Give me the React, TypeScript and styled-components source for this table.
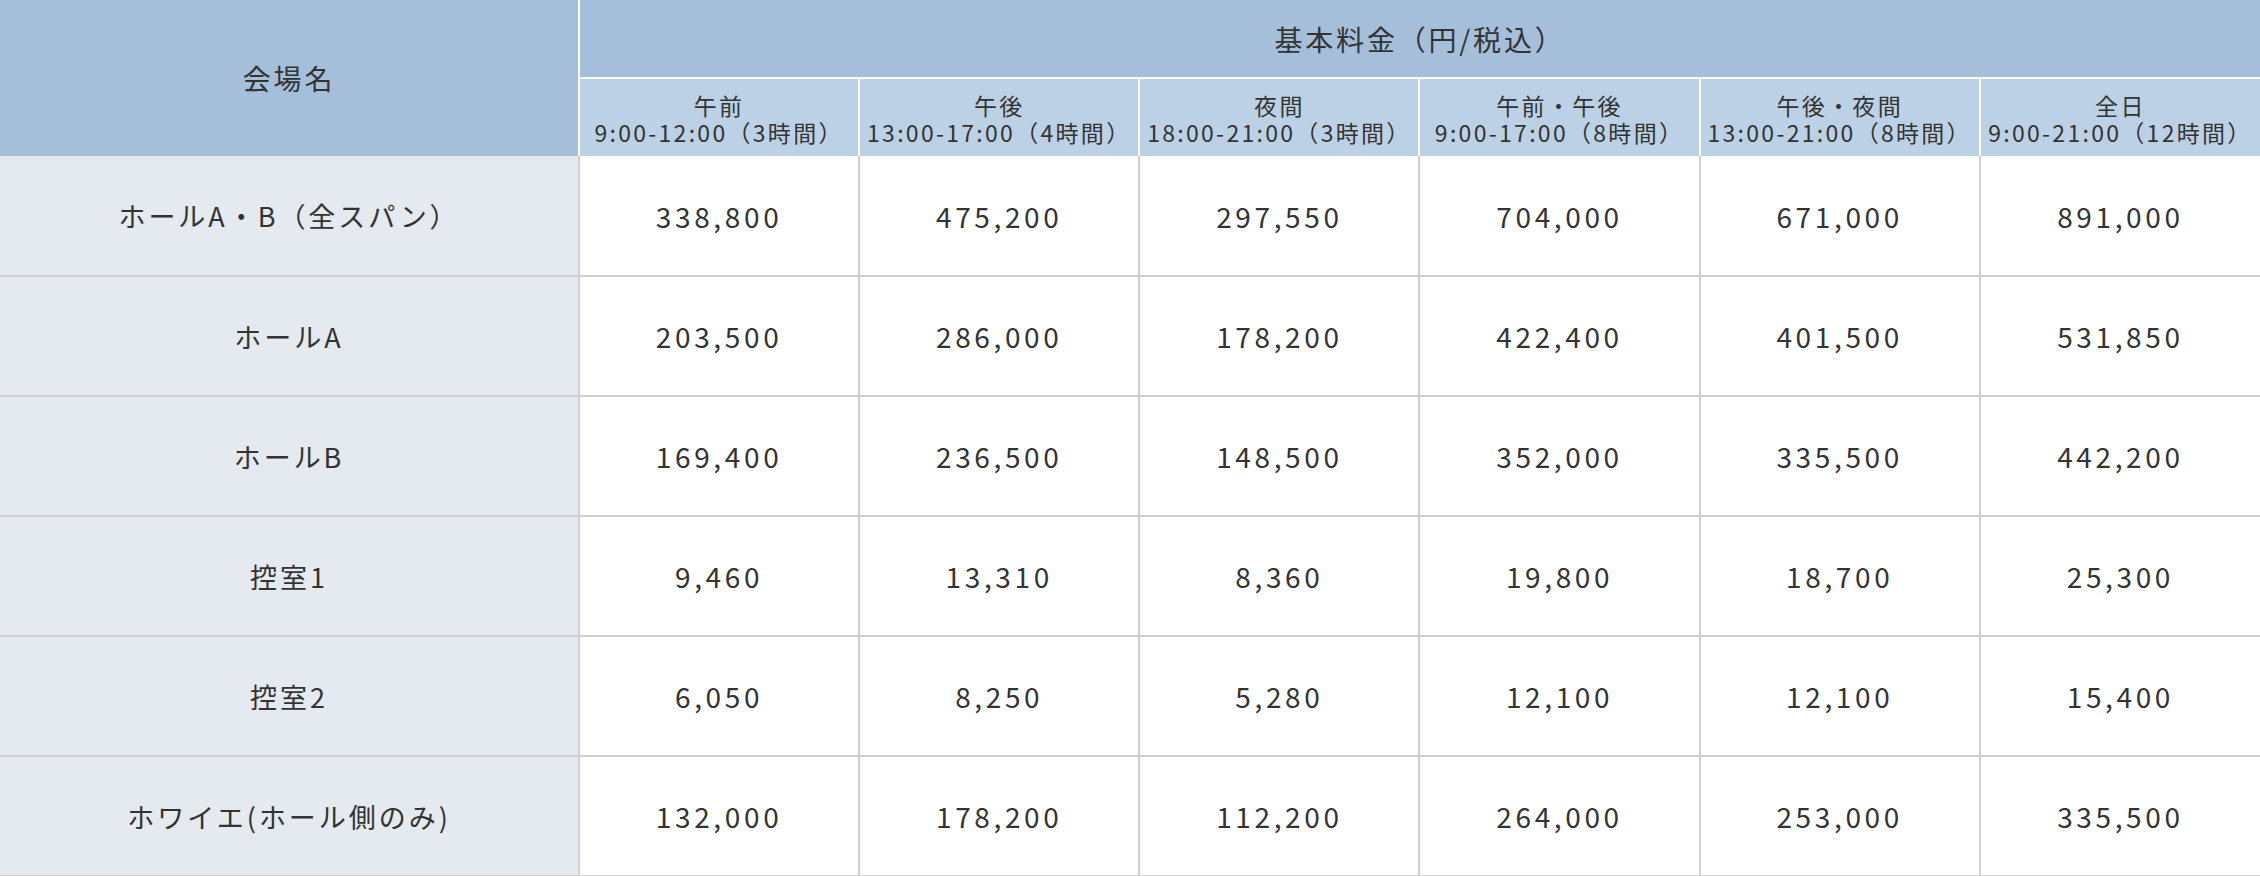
import React from "react";
import styled, { createGlobalStyle } from "styled-components";

const GlobalStyle = createGlobalStyle`
  html, body {
    margin: 0;
    padding: 0;
    background: #ffffff;
  }
  body {
    font-family: "Noto Sans CJK JP", "Noto Sans", sans-serif;
    color: #333333;
  }
`;

interface PriceRow {
  name: string;
  prices: string[];
}

const slots = [
  { label: "午前", time: "9:00-12:00（3時間）" },
  { label: "午後", time: "13:00-17:00（4時間）" },
  { label: "夜間", time: "18:00-21:00（3時間）" },
  { label: "午前・午後", time: "9:00-17:00（8時間）" },
  { label: "午後・夜間", time: "13:00-21:00（8時間）" },
  { label: "全日", time: "9:00-21:00（12時間）" },
];

const rows: PriceRow[] = [
  { name: "ホールA・B（全スパン）", prices: ["338,800", "475,200", "297,550", "704,000", "671,000", "891,000"] },
  { name: "ホールA", prices: ["203,500", "286,000", "178,200", "422,400", "401,500", "531,850"] },
  { name: "ホールB", prices: ["169,400", "236,500", "148,500", "352,000", "335,500", "442,200"] },
  { name: "控室1", prices: ["9,460", "13,310", "8,360", "19,800", "18,700", "25,300"] },
  { name: "控室2", prices: ["6,050", "8,250", "5,280", "12,100", "12,100", "15,400"] },
  { name: "ホワイエ(ホール側のみ)", prices: ["132,000", "178,200", "112,200", "264,000", "253,000", "335,500"] },
];

const PriceTable = styled.table`
  width: 2260px;
  table-layout: fixed;
  border-collapse: collapse;
  text-align: center;
`;

const HeadRow = styled.tr`
  height: 78px;
`;

const BodyRow = styled.tr`
  height: 120px;
`;

const VenueHead = styled.th`
  background: #a5bfda;
  border-right: 2px solid #ffffff;
  font-size: 28px;
  font-weight: 400;
  letter-spacing: 0.1em;
  padding: 0;
`;

const GroupHead = styled.th`
  background: #a5bfda;
  border-bottom: 2px solid #ffffff;
  font-size: 28px;
  font-weight: 400;
  letter-spacing: 0.1em;
  padding: 0;
`;

const SlotHead = styled.th`
  background: #bcd1e6;
  border-left: 2px solid #ffffff;
  font-size: 23px;
  font-weight: 400;
  letter-spacing: 0.1em;
  padding: 0;
  white-space: nowrap;

  &:first-child {
    border-left: none;
  }
`;

const SlotStack = styled.div`
  display: flex;
  flex-direction: column;
  align-items: center;
  gap: 4px;
  padding-top: 2px;
`;

const SlotLine = styled.span`
  display: block;
  line-height: 23px;
`;

const NameCell = styled.td`
  background: #e5e9f0;
  border-bottom: 2px solid #cfcfcf;
  border-right: 2px solid #cfcfcf;
  font-size: 27px;
  letter-spacing: 0.11em;
  padding: 0;
`;

const PriceCell = styled.td`
  background: #ffffff;
  border-bottom: 2px solid #cfcfcf;
  border-right: 2px solid #cfcfcf;
  font-size: 28px;
  letter-spacing: 0.13em;
  padding: 0;

  &:last-child {
    border-right: none;
  }
`;

export default function App() {
  return (
    <>
      <GlobalStyle />
      <PriceTable>
        <colgroup>
          <col style={{ width: 579 }} />
          {slots.map((s) => (
            <col key={s.label} />
          ))}
        </colgroup>
        <thead>
          <HeadRow>
            <VenueHead rowSpan={2}>会場名</VenueHead>
            <GroupHead colSpan={6}>基本料金（円/税込）</GroupHead>
          </HeadRow>
          <HeadRow>
            {slots.map((s) => (
              <SlotHead key={s.label}>
                <SlotStack>
                  <SlotLine>{s.label}</SlotLine>
                  <SlotLine>{s.time}</SlotLine>
                </SlotStack>
              </SlotHead>
            ))}
          </HeadRow>
        </thead>
        <tbody>
          {rows.map((r) => (
            <BodyRow key={r.name}>
              <NameCell>{r.name}</NameCell>
              {r.prices.map((p, i) => (
                <PriceCell key={i}>{p}</PriceCell>
              ))}
            </BodyRow>
          ))}
        </tbody>
      </PriceTable>
    </>
  );
}
